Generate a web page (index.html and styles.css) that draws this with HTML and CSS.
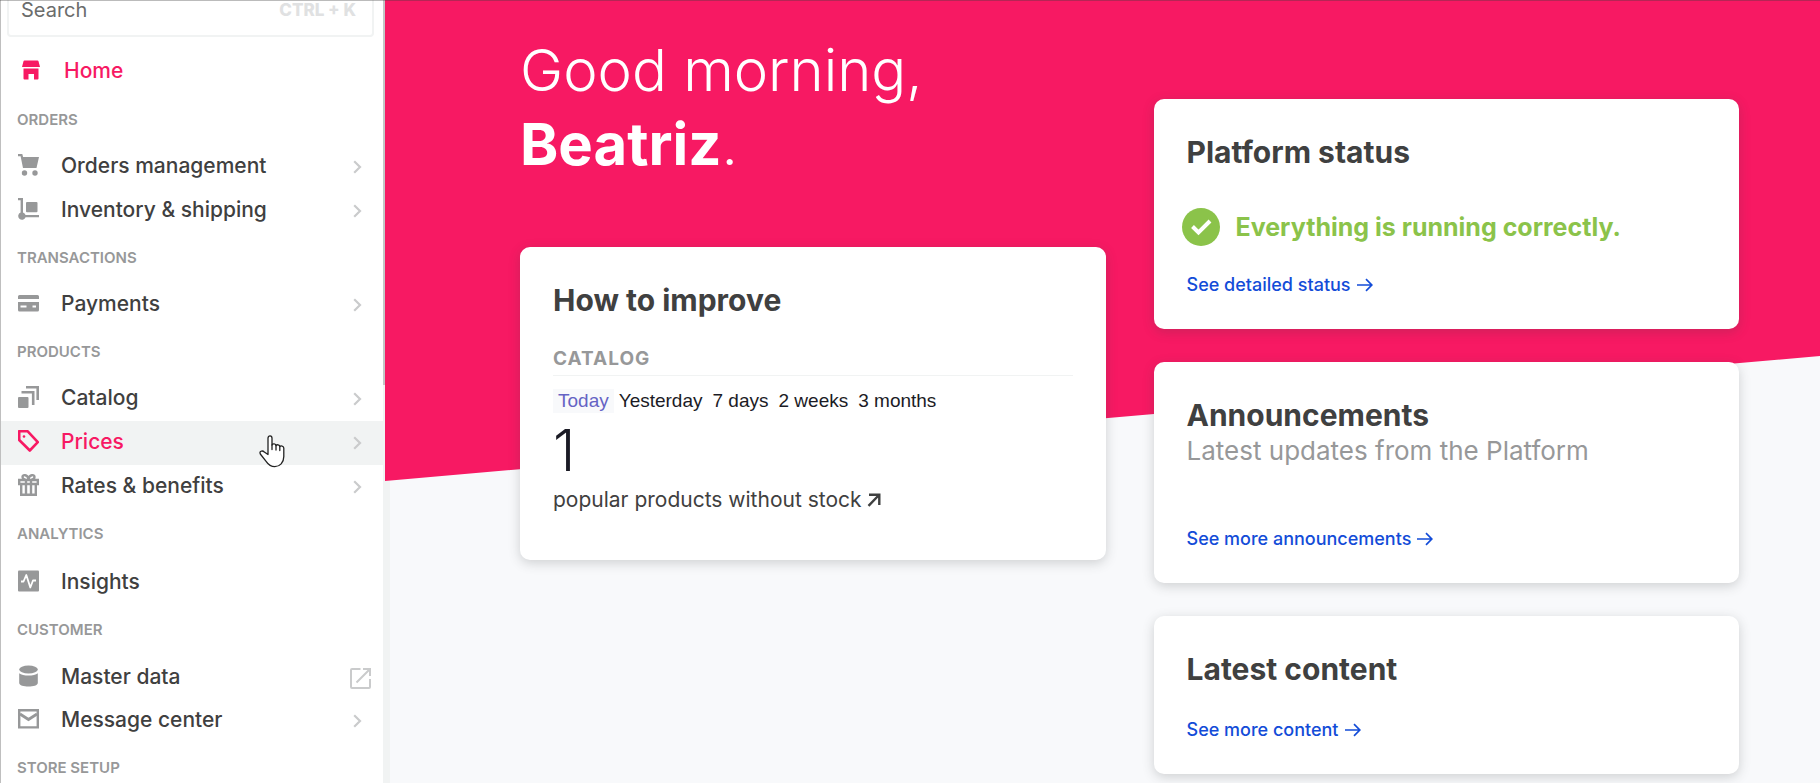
FILE: index.html
```html
<!DOCTYPE html>
<html lang="en">
<head>
<meta charset="utf-8">
<title>Admin home</title>
<link rel="stylesheet" href="styles.css">
</head>
<body>
<svg class="sprite" aria-hidden="true">
  <symbol id="chevron" viewBox="0 0 9 14"><path d="M1.200 1.200 7 7l-5.800 5.800" fill="none" stroke="currentColor" stroke-width="2.200"/></symbol>
  <symbol id="arrow" viewBox="0 0 16 14"><path d="M0 7h14.500M9 1.200 14.800 7 9 12.800" fill="none" stroke="currentColor" stroke-width="1.700"/></symbol>
</svg>
<div class="app">
  <aside class="sidebar">
    <label class="search">
      <input class="search-input" type="text" placeholder="Search" aria-label="Search">
      <kbd class="search-key">CTRL + K</kbd>
    </label>
    <nav class="nav">
      <a class="nav-row nav-row-home" href="#">
        <svg class="nav-icon" viewBox="0 0 21 21" fill="currentColor"><path d="M3.500 1h13a1 1 0 0 1 1 .8L19 7.500H1L2.500 1.800a1 1 0 0 1 1-.8zM2.500 9h15v10a1 1 0 0 1-1 1H13v-5.500H7.500V20h-4a1 1 0 0 1-1-1z"/></svg>
        <span class="nav-text">Home</span>
      </a>

      <h2 class="nav-label">ORDERS</h2>
      <a class="nav-row" href="#">
        <svg class="nav-icon" viewBox="0 0 21 22" fill="currentColor"><path d="M0 0h4.300l.8 3H21l-2.500 11H5L2.600 2.300H0z"/><circle cx="6.500" cy="19" r="2.700"/><circle cx="17" cy="19" r="2.700"/></svg>
        <span class="nav-text">Orders management</span>
        <svg class="chevron"><use href="#chevron"/></svg>
      </a>
      <a class="nav-row" href="#">
        <svg class="nav-icon" viewBox="0 0 21 22" fill="currentColor"><path d="M0 0h5v14.500A4 4 0 0 1 7.600 17H21v2.300H7.600A3.800 3.800 0 1 1 2.600 14.500V2.300H0z"/><rect x="8" y="4" width="11.500" height="10.300" rx="1"/></svg>
        <span class="nav-text">Inventory &amp; shipping</span>
        <svg class="chevron"><use href="#chevron"/></svg>
      </a>

      <h2 class="nav-label">TRANSACTIONS</h2>
      <a class="nav-row" href="#">
        <svg class="nav-icon" viewBox="0 0 21 22" fill="currentColor"><path fill-rule="evenodd" d="M1.500 3h18A1.500 1.500 0 0 1 21 4.500V7H0V4.500A1.500 1.500 0 0 1 1.500 3zM0 10h21v8a1.500 1.500 0 0 1-1.500 1.500h-18A1.500 1.500 0 0 1 0 18zM2.500 13.500v2h6v-2zM14.500 13.500v2h3.500v-2z"/></svg>
        <span class="nav-text">Payments</span>
        <svg class="chevron"><use href="#chevron"/></svg>
      </a>

      <h2 class="nav-label">PRODUCTS</h2>
      <a class="nav-row" href="#">
        <svg class="nav-icon" viewBox="0 0 21 22" fill="currentColor"><rect y="11" width="10.500" height="11" rx="1"/><path d="M3.500 5h13v14h-2.600V7.600H3.500zM8 0h13v14h-2.600V2.600H8z"/></svg>
        <span class="nav-text">Catalog</span>
        <svg class="chevron"><use href="#chevron"/></svg>
      </a>
      <a class="nav-row nav-row-active" href="#">
        <svg class="nav-icon" viewBox="0 0 21 22" fill="none" stroke="currentColor" stroke-width="2.600" stroke-linejoin="round"><path d="M1.200 1.200h8.300l10.300 11-8 8.300L1.200 10z"/><circle cx="6" cy="6.500" r="1.300" fill="currentColor" stroke="none"/></svg>
        <span class="nav-text">Prices</span>
        <svg class="chevron"><use href="#chevron"/></svg>
        <svg class="pointer" viewBox="0 0 26 33" fill="#fff" stroke="#222" stroke-width="1.300" stroke-linejoin="round" stroke-linecap="round"><path d="M9 19.500V3.200C9 .2 13 .2 13 3.200V10c.5-1.600 3.800-1.500 4 .6.800-1.400 3.700-1 3.800 1 .9-1.100 3.900-.8 4 1.500v8.500c0 6-4 10-9 10-4.500 0-6.500-2-8.500-5L1.300 19c-1.400-2.600 2-4 4-2z"/><path d="M13 10v4.500M17 10.600V15M20.800 11.600V15.500" fill="none"/></svg>
      </a>
      <a class="nav-row" href="#">
        <svg class="nav-icon" viewBox="0 0 21 22" fill="none" stroke="currentColor" stroke-width="2.400"><path d="M1.200 6h18.600v4H1.200zM3.200 10v10.800h14.600V10M8 6v15M13 6v15M10.500 6C8 6 4.500 5.500 4.500 3S9.500 0 10.500 5C11.500 0 16.500.500 16.500 3S13 6 10.500 6z"/></svg>
        <span class="nav-text">Rates &amp; benefits</span>
        <svg class="chevron"><use href="#chevron"/></svg>
      </a>

      <h2 class="nav-label nav-label-wide">ANALYTICS</h2>
      <a class="nav-row" href="#">
        <svg class="nav-icon" viewBox="0 0 21 22"><rect width="21" height="21" y=".5" rx="1" fill="currentColor"/><path d="M3 11.500h2.500L8.300 5l4 12.500 2.700-7h3" fill="none" stroke="#fff" stroke-width="1.800" stroke-linejoin="round"/></svg>
        <span class="nav-text">Insights</span>
      </a>

      <h2 class="nav-label nav-label-wide">CUSTOMER</h2>
      <a class="nav-row nav-row-external" href="#">
        <svg class="nav-icon" viewBox="0 0 21 22" fill="currentColor"><ellipse cx="10.500" cy="4.500" rx="9.300" ry="4"/><path d="M1.200 8.200c3.300 3.200 15.300 3.200 18.600 0V18c0 4.800-18.600 4.800-18.600 0z"/></svg>
        <span class="nav-text">Master data</span>
        <svg class="external" viewBox="0 0 21 21" fill="none" stroke="currentColor" stroke-width="2"><path d="M10.500 1H2a1 1 0 0 0-1 1v17a1 1 0 0 0 1 1h17a1 1 0 0 0 1-1v-8M13 1h7v7M20 1 6.500 14.500"/></svg>
      </a>
      <a class="nav-row" href="#">
        <svg class="nav-icon" viewBox="0 0 21 22" fill="none" stroke="currentColor" stroke-width="2.400"><path d="M1.200 2.200h18.600v17.200H1.200z"/><path d="m2 6 8.500 5.500L19 6" stroke-width="2.800"/></svg>
        <span class="nav-text">Message center</span>
        <svg class="chevron"><use href="#chevron"/></svg>
      </a>
      <h2 class="nav-label">STORE SETUP</h2>
    </nav>
  </aside>
  <div class="scrollbar"><div class="thumb"></div></div>

  <main class="main">
    <div class="backdrop"></div>
    <div class="columns">
      <div class="column">
        <h1 class="greeting">Good morning,<br><strong>Beatriz</strong>.</h1>
        <section class="card card-improve">
          <h2 class="card-title">How to improve</h2>
          <h3 class="card-section">CATALOG</h3>
          <div class="periods">
            <button class="period period-on" type="button">Today</button>
            <button class="period" type="button">Yesterday</button>
            <button class="period" type="button">7 days</button>
            <button class="period" type="button">2 weeks</button>
            <button class="period" type="button">3 months</button>
          </div>
          <p class="figure">1</p>
          <a class="metric" href="#">popular products without stock
            <svg class="metric-arrow" viewBox="0 0 14 14" fill="none" stroke="currentColor" stroke-width="2.400"><path d="M2 1.800h10.300V12M12 2 1.500 12.800"/></svg>
          </a>
        </section>
      </div>
      <div class="column column-cards">
        <section class="card">
          <h2 class="card-title">Platform status</h2>
          <p class="status">
            <svg class="status-icon" viewBox="0 0 38 38"><circle cx="19" cy="19" r="19" fill="#8bc34a"/><path d="m10.500 18.500 6 6L28 13" fill="none" stroke="#fff" stroke-width="4"/></svg>
            Everything is running correctly.
          </p>
          <a class="link" href="#">See detailed status <svg class="arrow"><use href="#arrow"/></svg></a>
        </section>
        <section class="card">
          <h2 class="card-title">Announcements</h2>
          <p class="subtitle">Latest updates from the Platform</p>
          <a class="link" href="#">See more announcements <svg class="arrow"><use href="#arrow"/></svg></a>
        </section>
        <section class="card card-content">
          <h2 class="card-title">Latest content</h2>
          <a class="link" href="#">See more content <svg class="arrow"><use href="#arrow"/></svg></a>
        </section>
      </div>
    </div>
  </main>
</div>
</body>
</html>
```
FILE: styles.css
```css
* {
  box-sizing: border-box;
}

body {
  margin: 0;
  font-family: Inter, "Liberation Sans", sans-serif;
  color: #3f4040;
  background: #f8f9fb;
}

h1, h2, h3, p {
  margin: 0;
}

a {
  color: inherit;
  text-decoration: none;
}

.sprite {
  display: none;
}

.app {
  display: flex;
  height: 100vh;
  overflow: hidden;
  position: relative;
}

.app::before {
  content: "";
  position: absolute;
  z-index: 3;
  inset: 0 0 auto 0;
  height: 1px;
  background: rgba(60, 60, 60, 0.35);
}

/* Sidebar */
.sidebar {
  flex: 0 0 383px;
  overflow: hidden;
  background: #fff;
  border-left: 1px solid #bfbfbf;
}

.search {
  display: flex;
  align-items: center;
  height: 54px;
  margin: -17px 9px 12px 6px;
  padding: 0 16px 0 12px;
  border: 2px solid #f1f3f3;
  border-radius: 4px;
}

.search-input {
  flex: 1;
  min-width: 0;
  padding: 0;
  border: 0;
  outline: 0;
  background: none;
  font: 400 20px/24px Inter, sans-serif;
}

.search-input::placeholder {
  color: #6b6c6c;
}

.search-key {
  font: 800 17px/24px Inter, sans-serif;
  color: #e0e1e2;
}

.nav-label {
  height: 50px;
  padding: 16px 0 0 16px;
  font-size: 15px;
  line-height: 18px;
  font-weight: 600;
  color: #979899;
}

.nav-label-wide {
  height: 52px;
}

.nav-row {
  display: flex;
  align-items: center;
  position: relative;
  height: 44px;
  padding: 0 21px 0 17px;
  color: #3f4040;
}

.nav-row-home {
  height: 46px;
  padding-left: 20px;
  color: #f71963;
}

.nav-row-active {
  background: #f1f3f3;
}

.nav-row-external {
  height: 42px;
  padding-right: 12px;
}

.nav-icon {
  width: 21px;
  height: 22px;
  margin: 0 22px 4px 0;
  color: #979899;
}

.nav-text {
  flex: 1;
  padding-bottom: 2px;
  font-size: 21px;
  line-height: 26px;
  font-weight: 500;
}

.nav-row-home .nav-icon,
.nav-row-active .nav-icon,
.nav-row-active .nav-text {
  color: #f71963;
}

.chevron {
  width: 9px;
  height: 14px;
  color: #cacbcc;
}

.external {
  width: 21px;
  height: 21px;
  color: #cacbcc;
}

.pointer {
  position: absolute;
  z-index: 2;
  top: 14px;
  right: 98px;
  width: 26px;
  height: 33px;
}

.scrollbar {
  flex: 0 0 2px;
  background: #f1f3f3;
}

.thumb {
  height: 385px;
  background: #c4c5c6;
}

/* Main area */
.main {
  flex: 1;
  position: relative;
  border-left: 5px solid #f1f3f3;
}

.backdrop {
  position: absolute;
  inset: 0 0 auto -5px;
  height: 481px;
  background: #f71963;
  clip-path: polygon(0 0, 100% 0, 100% 356px, 0 100%);
}

.columns {
  display: flex;
  position: relative;
  gap: 48px;
  padding: 33px 81px 0 130px;
}

.column {
  flex: 1 1 0;
  min-width: 0;
}

.column-cards {
  display: flex;
  flex-direction: column;
  gap: 33px;
  padding-top: 66px;
}

.greeting {
  font-size: 58px;
  line-height: 74px;
  font-weight: 300;
  color: #fff;
  margin-bottom: 66px;
}

.greeting strong {
  font-weight: 700;
}

.card {
  padding: 33px;
  border-radius: 10px;
  background: #fff;
  box-shadow: 0 3px 12px rgba(61, 62, 64, 0.22);
}

.card-improve {
  padding-bottom: 46px;
}

.card-title {
  font-size: 30px;
  line-height: 40px;
  font-weight: 700;
}

.card-section {
  margin-top: 26px;
  padding-bottom: 3px;
  border-bottom: 1px solid #f1f3f3;
  font-size: 19px;
  line-height: 26px;
  font-weight: 700;
  letter-spacing: 1px;
  color: #979899;
}

.periods {
  display: flex;
  margin-top: 13px;
}

.period {
  padding: 0 5px;
  border: 0;
  background: none;
  font: 400 19px/24px "Liberation Sans", Arial, sans-serif;
  color: #1b1b25;
}

.period-on {
  background: #f8f9fb;
  color: #6563c4;
}

.figure {
  margin-top: 8px;
  font-size: 57px;
  line-height: 60px;
  font-weight: 300;
  color: #1b1b25;
}

.metric {
  display: flex;
  align-items: center;
  gap: 5px;
  margin-top: 5px;
  font-size: 21px;
  line-height: 28px;
}

.metric-arrow {
  width: 14px;
  height: 14px;
}

.status {
  display: flex;
  align-items: center;
  gap: 16px;
  margin: 36px 0 28px -5px;
  font-size: 25px;
  line-height: 38px;
  font-weight: 700;
  color: #8bc34a;
}

.status-icon {
  width: 38px;
  height: 38px;
}

.subtitle {
  margin-bottom: 61px;
  font-size: 26px;
  line-height: 32px;
  color: #979899;
}

.link {
  display: flex;
  align-items: center;
  gap: 6px;
  font-size: 18px;
  line-height: 22px;
  font-weight: 500;
  color: #134cd8;
}

.card-content .link {
  margin-top: 30px;
}

.arrow {
  width: 16px;
  height: 14px;
}
```
